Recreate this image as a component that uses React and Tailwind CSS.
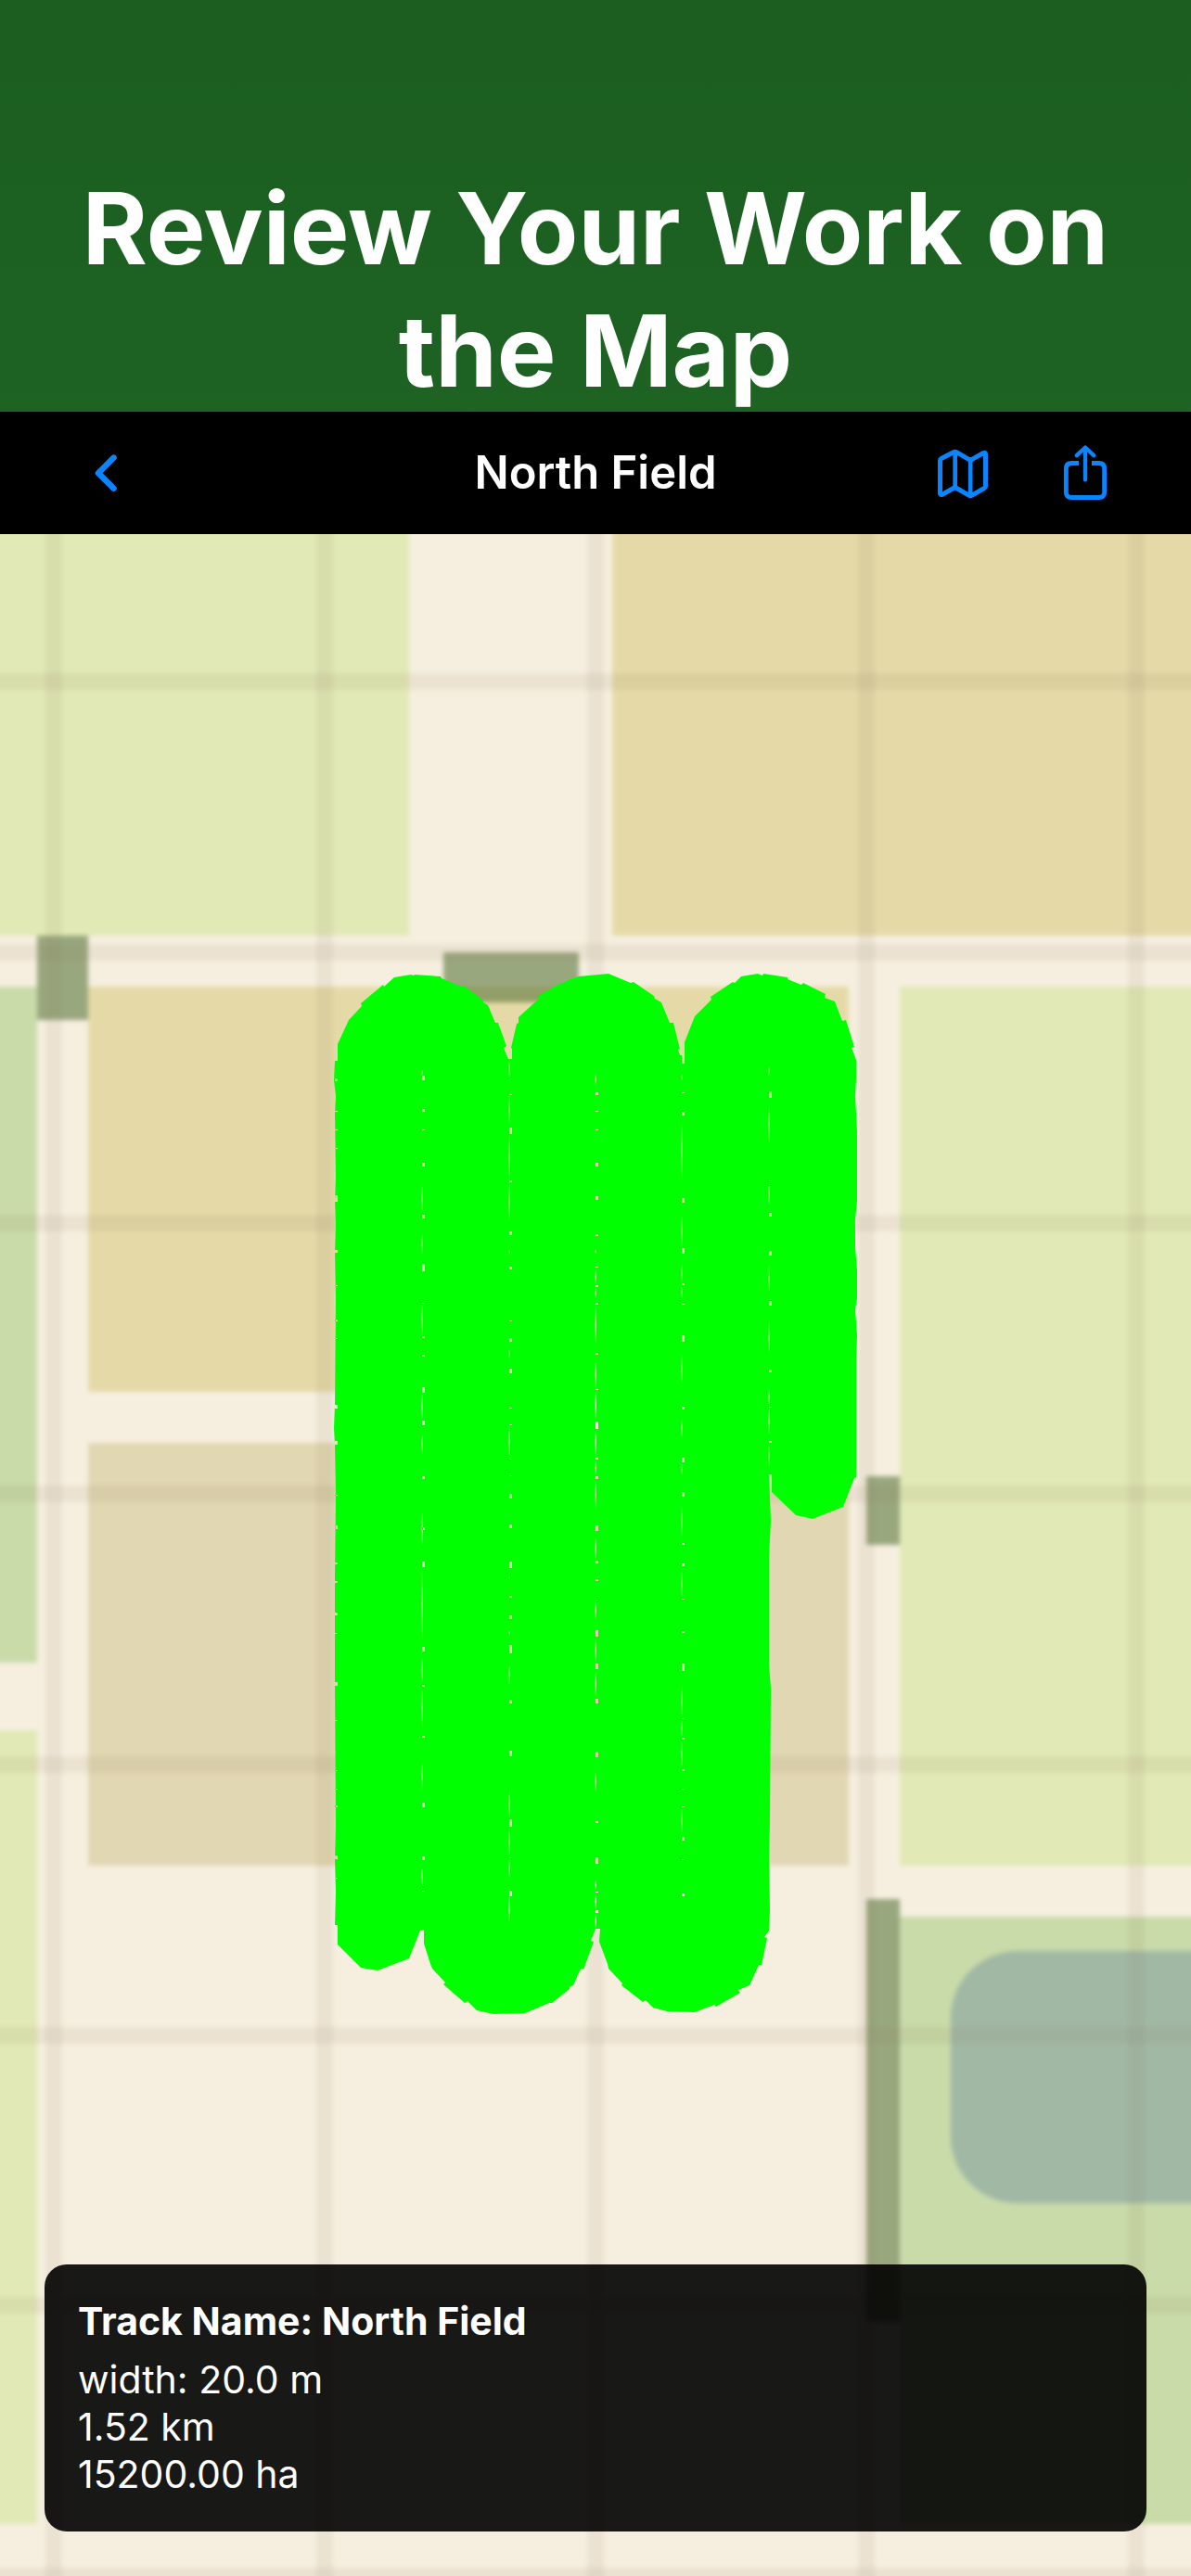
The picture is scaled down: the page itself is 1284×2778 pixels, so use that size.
import React from 'react';

const BOTTOM = 2800;
const RIGHT = 1310;

const fields = [
    { x: -30, y: 540, w: 471, h: 469, fill: '#e1e9b6' },
    { x: 660, y: 540, w: RIGHT - 660, h: 469, fill: '#e5daa7' },
    { x: -30, y: 1064, w: 70, h: 729, fill: '#c9dba9' },
    { x: 95, y: 1064, w: 820, h: 437, fill: '#e5daa7' },
    { x: 95, y: 1556, w: 820, h: 456, fill: '#e1d7b2' },
    { x: -30, y: 1866, w: 70, h: 856, fill: '#e1e9b6' },
    { x: 970, y: 1064, w: RIGHT - 970, h: 948, fill: '#e1e9b6' },
    { x: 970, y: 2067, w: RIGHT - 970, h: 655, fill: '#c9dba9' },
];

const hedges = [
    { x: 40, y: 1009, w: 55, h: 91 },
    { x: 478, y: 1027, w: 146, h: 54 },
    { x: 934, y: 1592, w: 36, h: 74 },
    { x: 934, y: 2048, w: 36, h: 456 },
];

const gridX = [58, 350, 642, 934, 1225];
const gridY = [735, 1027, 1319, 1611, 1903, 2195, 2486, 2778];

const coverage = [
    // caps of the first three passes
    '361,1144 364,1144 364,1126 376,1100 390,1085 389,1082 413,1062 414,1064 425,1054 443,1051 446,1052 447,1051',
    '475,1053 476,1055 497,1064 500,1063 521,1079 521,1081 526,1084 534,1103 537,1103 546,1128 543,1130 548,1142',
    '552,1142 552,1131 551,1130 557,1104 559,1103 559,1097 581,1077 580,1074 605,1060 606,1061 612,1057 624,1053',
    '656,1050 680,1060 683,1059 705,1074 706,1077 713,1081 722,1103 726,1103 733,1131 731,1132 733,1138 735,1138',
    '735,1147 738,1147 738,1124 749,1096 767,1078 766,1075 790,1059 792,1060 799,1053 817,1050 822,1052 823,1050',
    '849,1054 849,1056 864,1062 866,1060 890,1072 889,1076 900,1080 908,1101 912,1100 921,1129 918,1130 923,1143',
    // short last pass
    '923,1163 922,1182 924,1220 924,1295 922,1315 922,1345 924,1370 924,1400 922,1412 924,1440 923,1465 923,1575',
    '923,1593 921,1594 909,1625 876,1638 858,1634 832,1609 832,1590 829,1590 831,1640 829,1680 829,1795 831,1820',
    // turns at the bottom
    '830,1965 829,2000 830,2060 829,2082 824,2089 827,2090 821,2119 818,2119 808,2141 796,2146 798,2149 772,2164',
    '770,2162 749,2170 719,2169 704,2165 696,2157 693,2159 670,2141 671,2139 656,2123 655,2118 646,2094 647,2080',
    '642,2080 637,2093 640,2094 629,2124 626,2123 618,2141 614,2143 614,2145 595,2160 592,2160 566,2171 532,2172',
    '514,2168 504,2158 501,2160 478,2140 480,2138 466,2123 464,2118 457,2096 457,2081 453,2082 441,2112 407,2125',
    '389,2122 364,2097 364,2076 361,2076 362,2040 361,2006 362,1970 361,1818 361,1700 362,1610 361,1558 360,1540',
    '361,1515 362,1400 361,1350 362,1320 361,1296 362,1270 361,1200 362,1182 360,1165',
].join(' ');

// Uncovered spots between passes: [y, height] for the notches, [from, to] for the slits
const seams = [
    {
        x: 361,
        notches: [[1163, 3], [1198, 1], [1218, 1], [1238, 1], [1289, 7], [1348, 3], [1386, 1], [1423, 2], [1443, 1], [1515, 4], [1554, 4], [1612, 1], [1645, 4], [1685, 2], [1705, 2], [1739, 3], [1761, 1], [1814, 4], [1855, 1], [1909, 1], [1929, 1], [1947, 2], [2001, 4], [2025, 1]],
        slits: [],
    },
    {
        x: 455,
        notches: [[1160, 5], [1196, 3], [1218, 1], [1254, 4], [1310, 4], [1363, 8], [1405, 1], [1441, 2], [1461, 2], [1496, 6], [1532, 5], [1592, 3], [1647, 3], [1684, 6], [1776, 5], [1817, 2], [1872, 2], [1944, 5], [2002, 4], [2039, 1]],
        slits: [[1153, 1160], [1278, 1307], [1330, 1353], [1407, 1440], [1503, 1531], [1547, 1568], [1630, 1668], [1690, 1770], [1787, 1815], [1820, 1863], [1900, 1930], [2013, 2033]],
    },
    {
        x: 549,
        notches: [[1163, 1], [1180, 1], [1216, 7], [1273, 2], [1328, 4], [1366, 3], [1424, 1], [1443, 4], [1476, 5], [1518, 1], [1536, 1], [1573, 1], [1591, 1], [1611, 5], [1644, 4], [1684, 7], [1721, 2], [1742, 4], [1774, 9], [1833, 4], [1888, 6], [1962, 8], [2003, 1], [2039, 6]],
        slits: [[1143, 1162], [1182, 1213], [1223, 1272], [1275, 1318], [1347, 1353], [1455, 1465], [1538, 1572], [1700, 1703], [1758, 1763], [1795, 1817], [1930, 1961], [1971, 2002], [2005, 2025], [2045, 2073]],
    },
    {
        x: 642,
        notches: [[1178, 3], [1198, 1], [1218, 1], [1254, 4], [1290, 4], [1331, 2], [1366, 1], [1386, 2], [1405, 2], [1459, 2], [1498, 1], [1533, 8], [1572, 2], [1592, 3], [1645, 6], [1683, 3], [1703, 2], [1725, 1], [1758, 7], [1794, 6], [1832, 5], [1889, 6], [1964, 2], [2003, 7], [2040, 1], [2060, 3]],
        slits: [[1158, 1170], [1347, 1352], [1369, 1385], [1389, 1400], [1408, 1450], [1467, 1497], [1500, 1531], [1542, 1571], [1575, 1591], [1596, 1627], [1657, 1682], [1727, 1747], [1767, 1793], [1802, 1830], [1910, 1933], [2027, 2038], [2042, 2059], [2064, 2080]],
    },
    {
        x: 735,
        notches: [[1178, 1], [1199, 4], [1292, 5], [1346, 6], [1384, 2], [1406, 1], [1440, 7], [1517, 3], [1572, 5], [1609, 5], [1664, 2], [1686, 3], [1724, 1], [1759, 2], [1794, 8], [1853, 1], [1874, 2], [1908, 2], [1929, 1], [1948, 1], [1981, 4], [2005, 1], [2042, 3]],
        slits: [[1158, 1166], [1208, 1273], [1310, 1345], [1363, 1383], [1387, 1400], [1460, 1493], [1530, 1550], [1578, 1591], [1623, 1658], [1693, 1723], [1817, 1852], [1855, 1873], [1877, 1907], [1950, 1977]],
    },
    {
        x: 829,
        notches: [[1177, 7], [1273, 1], [1308, 4], [1349, 5], [1403, 5], [1477, 3], [1517, 1], [1554, 2]],
        slits: [[1150, 1160], [1192, 1233], [1275, 1300], [1365, 1393], [1425, 1460], [1497, 1516], [1519, 1547], [1558, 1582]],
    },
];

const gapPath = seams
    .map(({ x, notches, slits }) => [
        ...notches.map(([y, h]) => `M${x} ${y}h3v${h}h-3z`),
        ...slits.map(([from, to]) => `M${x} ${from}L${x + 1} ${(from + to) / 2}L${x} ${to}L${x - 0.4} ${(from + to) / 2}z`),
    ].join(''))
    .join('');

const FieldMap = () => (
    <svg viewBox="0 576 1284 2202" className="block w-full" role="img" aria-label="Field map">
        <defs>
            <filter id="soften" colorInterpolationFilters="sRGB">
                <feGaussianBlur stdDeviation="2.4" />
            </filter>
        </defs>
        <g filter="url(#soften)">
            <rect x="-30" y="540" width={RIGHT + 30} height={BOTTOM - 540} fill="#f6efe0" />
            {fields.map((f) => (
                <rect key={`${f.x}-${f.y}`} x={f.x} y={f.y} width={f.w} height={f.h} fill={f.fill} />
            ))}
            <rect x="1025" y="2104" width="340" height="272" rx="72" fill="#a1b8a5" />
            {hedges.map((h) => (
                <rect key={`${h.x}-${h.y}`} x={h.x} y={h.y} width={h.w} height={h.h} fill="rgb(92 119 60 / 0.6)" />
            ))}
            {gridX.map((x) => (
                <rect key={x} x={x - 9} y="540" width="18" height={BOTTOM - 540} fill="rgb(140 120 90 / 0.1)" />
            ))}
            {gridY.map((y) => (
                <rect key={y} x="-30" y={y - 9} width={RIGHT + 30} height="18" fill="rgb(140 120 90 / 0.1)" />
            ))}
        </g>
        <path d={`M${coverage}Z${gapPath}`} fill="#00ff00" fillRule="evenodd" />
    </svg>
);

const BackIcon = () => (
    <svg width="50" height="50" viewBox="0 0 50 50" fill="none" stroke="currentColor" strokeWidth="6.4" strokeLinecap="round" strokeLinejoin="round" aria-hidden="true">
        <path d="M33.6 8.6 17 25.200l16.600 16.600" />
    </svg>
);

const MapIcon = () => (
    <svg width="56" height="55" viewBox="147 129 168 165" fill="none" stroke="currentColor" strokeWidth="15" strokeLinejoin="round" aria-hidden="true">
        <path d="M160.500 170q0-4 4-6.500l39-20.500q5-3 10 0l45 26 42-23.500q7-3 7 3.500v104q0 4-4 6.500l-40 23q-5 3-10 0l-44.500-26-41.500 23.500q-7 2-7-4z" />
        <path d="M209 143v112M258.500 168v114" strokeWidth="14" />
    </svg>
);

const ShareIcon = () => (
    <svg width="50" height="62" viewBox="555 120 150 186" fill="none" stroke="currentColor" aria-hidden="true">
        <path d="M609 181.500h-23q-18 0-18 18v75q0 18 18 18h88q18 0 18-18v-75q0-18-18-18h-23" strokeWidth="14.500" />
        <path d="M630 132v103M602.500 156.500 630 130.500l27.500 26" strokeWidth="13" strokeLinecap="round" strokeLinejoin="round" />
    </svg>
);

const NavBar = ({ title }) => (
    <nav className="grid grid-cols-[1fr_auto_1fr] items-center bg-black px-[89px] h-[132px] text-[#0a84ff]">
        <button type="button" aria-label="Back" className="justify-self-start">
            <BackIcon />
        </button>
        <h2 className="text-white text-[49px] leading-[60px] font-semibold">{title}</h2>
        <div className="flex items-center gap-20 justify-self-end">
            <button type="button" aria-label="Map type">
                <MapIcon />
            </button>
            <button type="button" aria-label="Share">
                <ShareIcon />
            </button>
        </div>
    </nav>
);

const TrackCard = ({ name, width, distance, area }) => (
    <section className="absolute inset-x-12 bottom-12 rounded-3xl bg-black/90 p-9 text-white text-[41px] leading-[51px]">
        <h3 className="mb-3 font-bold">Track Name: {name}</h3>
        <p>width: {width}</p>
        <p>{distance}</p>
        <p>{area}</p>
    </section>
);

const App = () => {
    return (
        <div className="min-h-screen bg-linear-to-b from-[#1b5e20] to-[#2e7d32] font-[Inter,sans-serif]">
            <header className="px-12 pt-[180px] text-center text-white">
                <h1 className="mx-auto text-[107px] leading-[132px] font-bold">Review Your Work on the Map</h1>
            </header>
            <NavBar title="North Field" />
            <main className="relative">
                <FieldMap />
                <TrackCard name="North Field" width="20.0 m" distance="1.52 km" area="15200.00 ha" />
            </main>
        </div>
    );
};

export default App;
